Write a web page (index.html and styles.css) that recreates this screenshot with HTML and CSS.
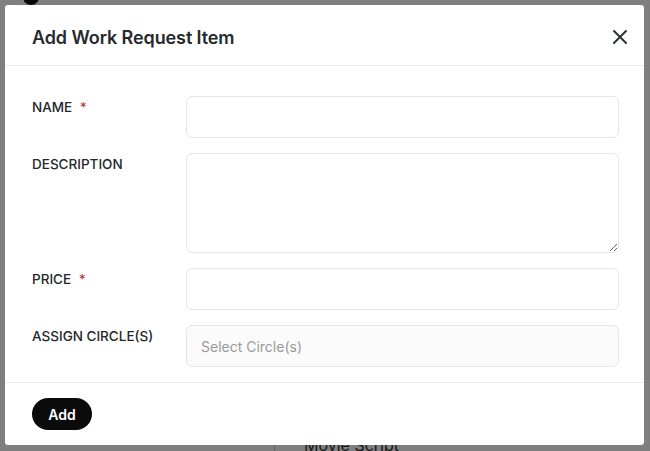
FILE: index.html
```html
<!DOCTYPE html>
<html>
<head>
<meta charset="utf-8">
<link rel="stylesheet" href="styles.css">
</head>
<body>
<div class="page">
  <div class="page-top"><span class="avatar"></span></div>
  <div class="page-main">
    <div class="side"></div>
    <div class="content"><div class="row-title">Movie Script</div></div>
  </div>
</div>
<div class="overlay">
  <div class="modal">
    <div class="modal-header">
      <h2 class="modal-title">Add Work Request Item</h2>
      <button class="close" aria-label="Close">
        <svg width="14" height="14" viewBox="0 0 14 14"><path d="M1 1L13 13M13 1L1 13" stroke="#2f3337" stroke-width="2" stroke-linecap="round" fill="none"/></svg>
      </button>
    </div>
    <div class="modal-body">
      <div class="field">
        <label class="label">NAME <span class="req">*</span></label>
        <input class="control" type="text">
      </div>
      <div class="field">
        <label class="label">DESCRIPTION</label>
        <textarea class="control area"></textarea>
      </div>
      <div class="field">
        <label class="label">PRICE <span class="req">*</span></label>
        <input class="control" type="text">
      </div>
      <div class="field">
        <label class="label">ASSIGN CIRCLE(S)</label>
        <input class="control select" type="text" placeholder="Select Circle(s)">
      </div>
    </div>
    <div class="modal-footer">
      <button class="btn-add">Add</button>
    </div>
  </div>
</div>
</body>
</html>
```
FILE: styles.css
```css
* { box-sizing: border-box; }
html, body { margin: 0; padding: 0; }
body {
  width: 650px;
  height: 451px;
  overflow: hidden;
  background: #ffffff;
  font-family: Inter, "Noto Sans", sans-serif;
  position: relative;
}
.page { height: 451px; display: flex; flex-direction: column; }
.page-top { height: 20px; padding-left: 23px; }
.avatar {
  display: block;
  width: 16px; height: 16px;
  margin-top: -11px;
  border-radius: 50%;
  background: #111;
}
.page-main { flex: 1; display: flex; }
.side { width: 275px; border-right: 1px solid #ccc; }
.content { flex: 1; display: flex; flex-direction: column; justify-content: flex-end; padding-left: 29px; }
.row-title { font-size: 16px; color: #333; line-height: 20px; margin-bottom: -4px; }

.overlay {
  position: absolute;
  inset: 0;
  background: rgba(0, 0, 0, 0.5);
  padding: 5px 6px 6px 5px;
}
.modal {
  background: #fff;
  border-radius: 3px;
  height: 440px;
  display: flex;
  flex-direction: column;
}
.modal-header {
  height: 61px;
  flex: none;
  border-bottom: 1px solid #e9ebee;
  display: flex;
  align-items: center;
  justify-content: space-between;
  padding: 4px 16px 0 27px;
}
.modal-title {
  margin: 0;
  font-size: 18px;
  font-weight: 600;
  color: #262a2e;
  letter-spacing: -0.1px;
}
.close {
  border: 0;
  background: none;
  padding: 0;
  width: 16px; height: 16px;
  display: flex; align-items: center; justify-content: center;
}
.modal-body {
  flex: 1;
  padding: 30px 25px 0 27px;
  display: flex;
  flex-direction: column;
  gap: 15px;
}
.field { display: flex; align-items: flex-start; }
.label {
  width: 154px;
  flex: none;
  font-size: 13.5px;
  font-weight: 500;
  color: #23272b;
  line-height: 20px;
  padding-top: 1px;
}
.req { color: #b53a3a; margin-left: 4px; }
.control {
  display: block;
  flex: 1;
  height: 42px;
  margin: 0;
  border: 1px solid #e3e6ea;
  border-radius: 6px;
  background: #fff;
  font-family: Inter, "Noto Sans", sans-serif;
  font-size: 14px;
  padding: 0 14px;
  outline: none;
}
.area { height: 100px; resize: vertical; padding: 10px 14px; }
.select { background: #fbfbfb; }
.select::placeholder { color: #9a9a9a; }
.modal-footer {
  height: 63px;
  flex: none;
  border-top: 1px solid #e9ebee;
  padding: 15px 27px 0;
}
.btn-add {
  width: 60px;
  height: 32px;
  border: 0;
  border-radius: 16px;
  background: #0b0b0b;
  color: #fff;
  font-family: Inter, "Noto Sans", sans-serif;
  font-size: 14px;
  font-weight: 600;
  padding: 0;
}
```
